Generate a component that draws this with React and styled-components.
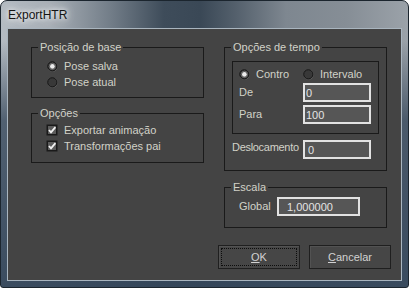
import styled, { createGlobalStyle } from "styled-components";

const GlobalStyle = createGlobalStyle`
  html, body {
    margin: 0;
    padding: 0;
    background: #ffffff;
  }

  * {
    box-sizing: border-box;
  }
`;

function RadioMark({ checked }) {
  return (
    <svg width="11" height="11" viewBox="0 0 11 11">
      <circle cx="5.5" cy="5.5" r="5.2" fill="#5e5e5e" />
      <circle cx="5.3" cy="5.3" r="4.6" fill="#383838" stroke="#141414" strokeWidth="1" />
      {checked && <circle cx="5.4" cy="5.4" r="2.4" fill="#ececec" />}
      {checked && <circle cx="5.4" cy="5.4" r="3.2" fill="none" stroke="#8a8a8a" strokeWidth="0.6" />}
    </svg>
  );
}

function CheckMark() {
  return (
    <svg width="12" height="12" viewBox="0 0 12 12">
      <rect x="0.5" y="0.5" width="11" height="11" fill="#1a1a1a" />
      <rect x="2" y="2" width="8" height="8" fill="#5c5c5c" />
      <path d="M3 6 L5 8.4 L9.4 3.2" fill="none" stroke="#f2f2f2" strokeWidth="1.8" />
    </svg>
  );
}

export default function App() {
  return (
    <>
      <GlobalStyle />
      <Window>
        <TitleBar>
          <Title>ExportHTR</Title>
        </TitleBar>
        <Client>
          <Main>
            <LeftColumn>
              <Group $padTop={10} $padLeft={15} $height={51}>
                <Legend>Posição de base</Legend>
                <OptionRow>
                  <RadioMark checked />
                  <span>Pose salva</span>
                </OptionRow>
                <OptionRow>
                  <RadioMark />
                  <span>Pose atual</span>
                </OptionRow>
              </Group>
              <Group $padTop={8} $padLeft={14} $height={50}>
                <Legend>Opções</Legend>
                <OptionRow>
                  <CheckMark />
                  <span>Exportar animação</span>
                </OptionRow>
                <OptionRow>
                  <CheckMark />
                  <span>Transformações pai</span>
                </OptionRow>
              </Group>
            </LeftColumn>

            <RightColumn>
              <Group $padTop={13} $padLeft={7} $height={124}>
                <Legend>Opções de tempo</Legend>
                <RangeBox>
                  <OptionRow>
                    <RadioMark checked />
                    <span>Contro</span>
                  </OptionRow>
                  <OptionRow>
                    <RadioMark />
                    <span>Intervalo</span>
                  </OptionRow>
                  <FieldLabel>De</FieldLabel>
                  <Field defaultValue="0" $width={68} />
                  <FieldLabel>Para</FieldLabel>
                  <Field defaultValue="100" $width={68} />
                </RangeBox>
                <OffsetRow>
                  <OffsetLabel>Deslocamento</OffsetLabel>
                  <Field defaultValue="0" $width={68} $indent={3} />
                </OffsetRow>
              </Group>
              <Group $padTop={9} $padLeft={14} $height={41}>
                <Legend>Escala</Legend>
                <ScaleRow>
                  <FieldLabel>Global</FieldLabel>
                  <Field defaultValue="1,000000" $width={83} $indent={8} />
                </ScaleRow>
              </Group>
            </RightColumn>
          </Main>

          <Footer>
            <Button $focused>
              <u>O</u>K
            </Button>
            <Button>
              <u>C</u>ancelar
            </Button>
          </Footer>
        </Client>
      </Window>
    </>
  );
}

const Window = styled.div`
  width: 409px;
  height: 288px;
  padding: 0 6px 6px 6px;
  border: 1px solid #1b252e;
  border-radius: 7px 7px 3px 3px;

  display: flex;
  flex-direction: column;

  font-family: "Liberation Sans", Arial, sans-serif;
  font-size: 11px;

  background:
    linear-gradient(
      180deg,
      rgba(48, 66, 86, 0) 0,
      rgba(48, 66, 86, 0) 40px,
      rgba(48, 66, 86, 0.75) 120px,
      rgba(52, 70, 90, 0.95) 100%
    ),
    linear-gradient(
      90deg,
      #b4bbc2 0%,
      #a8afb6 12%,
      #727d88 27%,
      #3e4c5a 40%,
      #3a4856 49%,
      #55616d 58%,
      #7e8790 70%,
      #868e96 85%,
      #9ba2a9 100%
    );
`;

const TitleBar = styled.div`
  height: 27px;
  padding-left: 1px;

  display: flex;
  align-items: center;
`;

const Title = styled.span`
  font-family: "Liberation Sans", Arial, sans-serif;
  font-size: 12px;
  color: #141414;
  text-shadow:
    0 0 4px rgba(255, 255, 255, 0.9),
    0 0 8px rgba(255, 255, 255, 0.8),
    0 0 12px rgba(255, 255, 255, 0.6);
`;

const Client = styled.div`
  flex: 1;
  border: 1px solid #a9b5bf;

  display: flex;
  flex-direction: column;

  color: #d2d2c8;
  background-color: #444444;
`;

const Main = styled.div`
  padding: 18px 0 0 23px;

  display: flex;
  gap: 20px;
`;

const LeftColumn = styled.div`
  width: 173px;

  display: flex;
  flex-direction: column;
  gap: 15px;
`;

const RightColumn = styled.div`
  width: 163px;

  display: flex;
  flex-direction: column;
  gap: 16px;
`;

const Group = styled.div`
  height: ${(props) => props.$height}px;
  padding: ${(props) => props.$padTop}px 7px 0 ${(props) => props.$padLeft}px;
  border: 1px solid #1a1a1a;

  position: relative;
`;

const Legend = styled.span`
  padding: 0 2px;

  position: absolute;
  top: -7px;
  left: 6px;

  line-height: 13px;
  background-color: #444444;
`;

const OptionRow = styled.label`
  height: 16px;

  display: flex;
  align-items: center;
  gap: 6px;

  line-height: 13px;
  white-space: nowrap;

  svg {
    flex-shrink: 0;
  }
`;

const RangeBox = styled.div`
  height: 73px;
  padding: 4px 0 0 6px;
  border: 1px solid #1a1a1a;

  display: grid;
  grid-template-columns: 64px 68px;
  grid-template-rows: 16px 19px 19px;
  row-gap: 1px;
  align-items: center;

  > :nth-child(5),
  > :nth-child(6) {
    margin-top: 4px;
  }
`;

const FieldLabel = styled.span`
  line-height: 13px;
`;

const Field = styled.input`
  width: ${(props) => props.$width}px;
  height: 19px;
  padding: 0 0 0 ${(props) => props.$indent || 1}px;
  border: 2px solid #e2e2e2;
  outline: none;

  font-family: "Liberation Sans", Arial, sans-serif;
  font-size: 11px;
  color: #e4e4e4;

  background-color: #565656;
`;

const OffsetRow = styled.div`
  margin-top: 6px;

  display: flex;
  align-items: center;
`;

const OffsetLabel = styled.span`
  width: 71px;
  padding-bottom: 4px;

  line-height: 13px;
  letter-spacing: -0.3px;
`;

const ScaleRow = styled.div`
  display: grid;
  grid-template-columns: 38px 83px;
  align-items: center;
`;

const Footer = styled.div`
  margin-top: 17px;
  padding-right: 10px;

  display: flex;
  justify-content: flex-end;
  gap: 9px;
`;

const Button = styled.button`
  width: 82px;
  height: 24px;
  padding: 0;
  border: 1px solid #1f1f1f;

  position: relative;

  font-family: "Liberation Sans", Arial, sans-serif;
  font-size: 11px;
  color: #d2d2d2;

  background-color: #464646;
  box-shadow: inset 1px 1px 0 #525252;

  &::after {
    content: "";
    display: ${(props) => (props.$focused ? "block" : "none")};
    position: absolute;
    inset: 2px;
    border: 1px dotted #0c0c0c;
  }
`;
